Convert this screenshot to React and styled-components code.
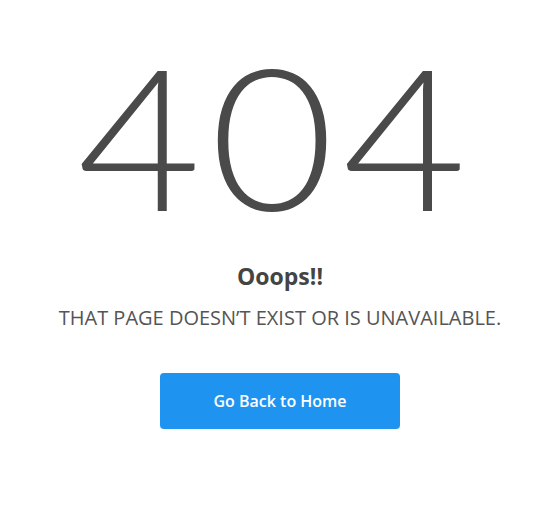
import React from "react";
import styled, { createGlobalStyle } from "styled-components";

const GlobalStyle = createGlobalStyle`
  body {
    margin: 0;
    background: #fff;
    font-family: "Open Sans", "Liberation Sans", sans-serif;
  }
`;

const Page = styled.div`
  display: flex;
  flex-direction: column;
  align-items: center;
  width: 550px;
  height: 524px;
  padding: 25px 0 0 10px;
  box-sizing: border-box;
`;

const Code = styled.h1`
  margin: 0 8px 0 0;
  font-family: "Lato", sans-serif;
  font-weight: 300;
  font-size: 198px;
  line-height: 220px;
  letter-spacing: 8px;
  color: #4a4a4a;
  transform: scaleX(1.08);
`;

const Title = styled.h2`
  margin: 15px 0 0;
  font-size: 23px;
  font-weight: 700;
  color: #444;
`;

const Message = styled.p`
  margin: 12px 0 0;
  font-size: 20px;
  color: #555;
  text-transform: uppercase;
`;

const HomeButton = styled.a`
  display: flex;
  align-items: center;
  justify-content: center;
  margin-top: 42px;
  width: 240px;
  height: 56px;
  border-radius: 4px;
  background: #1e94f0;
  color: #fff;
  font-size: 16px;
  font-weight: 600;
  text-decoration: none;
`;

export default function App() {
  return (
    <Page>
      <GlobalStyle />
      <Code>404</Code>
      <Title>Ooops!!</Title>
      <Message>That page doesn’t exist or is unavailable.</Message>
      <HomeButton href="#">Go Back to Home</HomeButton>
    </Page>
  );
}
